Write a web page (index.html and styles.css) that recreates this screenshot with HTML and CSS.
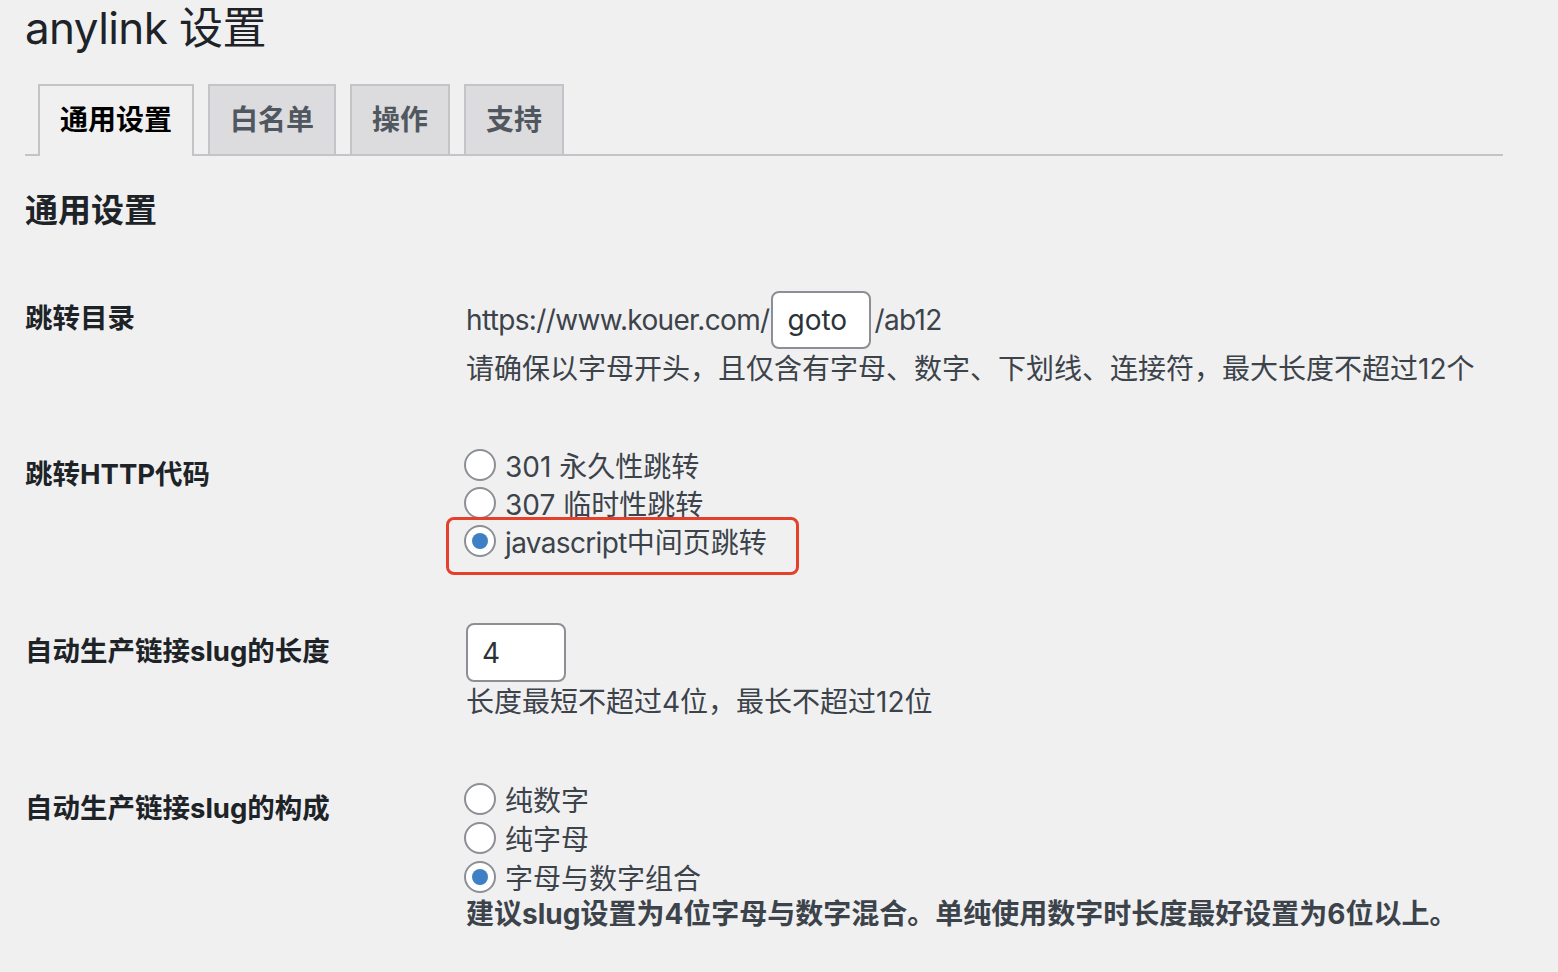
FILE: index.html
```html
<!DOCTYPE html>
<html lang="zh-CN">
<head>
<meta charset="utf-8">
<title>anylink 设置</title>
<link rel="stylesheet" href="styles.css">
</head>
<body>
<div class="wrap">
  <h1 class="title">anylink 设置</h1>
  <nav class="tabs">
    <a class="tab active">通用设置</a>
    <a class="tab">白名单</a>
    <a class="tab">操作</a>
    <a class="tab">支持</a>
  </nav>
  <h2 class="section-title">通用设置</h2>
  <form class="form">
    <div class="row row-dir">
      <div class="label">跳转目录</div>
      <div class="field">
        <div class="url-line">
          <span class="latin">https://www.kouer.com/</span>
          <input class="text-input" type="text" value="goto">
          <span class="latin">/ab12</span>
        </div>
        <p class="desc">请确保以字母开头，且仅含有字母、数字、下划线、连接符，最大长度不超过12个</p>
      </div>
    </div>
    <div class="row row-code">
      <div class="label">跳转HTTP代码</div>
      <div class="field radios">
        <label class="radio"><input type="radio" name="code"><span>301 永久性跳转</span></label>
        <label class="radio"><input type="radio" name="code"><span>307 临时性跳转</span></label>
        <label class="radio"><input type="radio" name="code" checked><span><span class="latin">javascript</span>中间页跳转</span><span class="highlight"></span></label>
      </div>
    </div>
    <div class="row row-len">
      <div class="label">自动生产链接slug的长度</div>
      <div class="field">
        <input class="text-input small" type="text" value="4">
        <p class="desc">长度最短不超过4位，最长不超过12位</p>
      </div>
    </div>
    <div class="row row-comp">
      <div class="label">自动生产链接slug的构成</div>
      <div class="field radios loose">
        <label class="radio"><input type="radio" name="comp"><span>纯数字</span></label>
        <label class="radio"><input type="radio" name="comp"><span>纯字母</span></label>
        <label class="radio"><input type="radio" name="comp" checked><span>字母与数字组合</span></label>
        <p class="desc strong">建议slug设置为4位字母与数字混合。单纯使用数字时长度最好设置为6位以上。</p>
      </div>
    </div>
  </form>
</div>
</body>
</html>
```
FILE: styles.css
```css
html, body {
  margin: 0;
  padding: 0;
  background: #f0f0f1;
}
body {
  font-family: Inter, "Noto Sans CJK SC", sans-serif;
  color: #3c434a;
  overflow: hidden;
}
.wrap {
  width: 1478px;
  padding-left: 25px;
}
.title {
  margin: -2px 0 0 0;
  font-size: 44px;
  line-height: 60px;
  font-weight: 400;
  letter-spacing: -0.6px;
  color: #1d2327;
}
.tabs {
  display: flex;
  align-items: flex-end;
  gap: 14px;
  margin-top: 26px;
  padding-left: 13px;
  border-bottom: 2px solid #c3c4c7;
}
.tab {
  display: block;
  border: 2px solid #c3c4c7;
  border-bottom: 0;
  padding: 10px 20px;
  line-height: 48px;
  font-size: 28px;
  font-weight: 700;
  background: #dcdcde;
  color: #50575e;
}
.tab.active {
  background: #f0f0f1;
  color: #000;
  padding-bottom: 12px;
  margin-bottom: -2px;
}
.section-title {
  margin: 32px 0 0 0;
  font-size: 33px;
  line-height: 44px;
  font-weight: 700;
  color: #1d2327;
}
.form {
  margin-top: 59px;
}
.row {
  display: grid;
  grid-template-columns: 441px 1fr;
}
.row + .row {
  margin-top: 57px;
}
.row.row-len {
  margin-top: 63px;
}
.label {
  font-size: 27.5px;
  line-height: 40px;
  font-weight: 700;
  color: #1d2327;
  padding-top: 8px;
}
.row-dir .label {
  padding-top: 7px;
}
.row-comp .label {
  padding-top: 9px;
}
.field {
  font-size: 28px;
}
.url-line {
  display: flex;
  align-items: center;
  height: 58px;
  font-size: 28px;
}
.latin {
  letter-spacing: -0.65px;
}
.text-input {
  box-sizing: border-box;
  width: 100px;
  height: 58px;
  margin: 0 3px 0 2px;
  padding: 0 14px;
  border: 2px solid #8c8f94;
  border-radius: 8px;
  background: #fff;
  font-family: inherit;
  font-size: 28px;
  color: #2c3338;
  outline: none;
}
.text-input.small {
  display: block;
  margin: 0;
  height: 59px;
}
.desc {
  margin: 0;
  font-size: 28px;
  line-height: 40px;
  color: #3c434a;
}
.desc.strong {
  font-weight: 700;
  line-height: 36px;
}
.radios {
  display: flex;
  flex-direction: column;
}
.radio {
  position: relative;
  display: flex;
  align-items: center;
  height: 38px;
  font-size: 28px;
}
.radios.loose .radio {
  height: 39px;
}
.radio input {
  appearance: none;
  -webkit-appearance: none;
  box-sizing: border-box;
  width: 32px;
  height: 32px;
  margin: 0 9px 0 -2px;
  border: 2px solid #8c8f94;
  border-radius: 50%;
  background: #fff;
  display: flex;
  align-items: center;
  justify-content: center;
  flex: none;
}
.radio input:checked::before {
  content: "";
  width: 16px;
  height: 16px;
  border-radius: 50%;
  background: #3f7fc4;
}
.highlight {
  position: absolute;
  left: -20px;
  top: -5px;
  width: 353px;
  height: 58px;
  box-sizing: border-box;
  border: 3px solid #e5402b;
  border-radius: 8px;
  pointer-events: none;
}
```
